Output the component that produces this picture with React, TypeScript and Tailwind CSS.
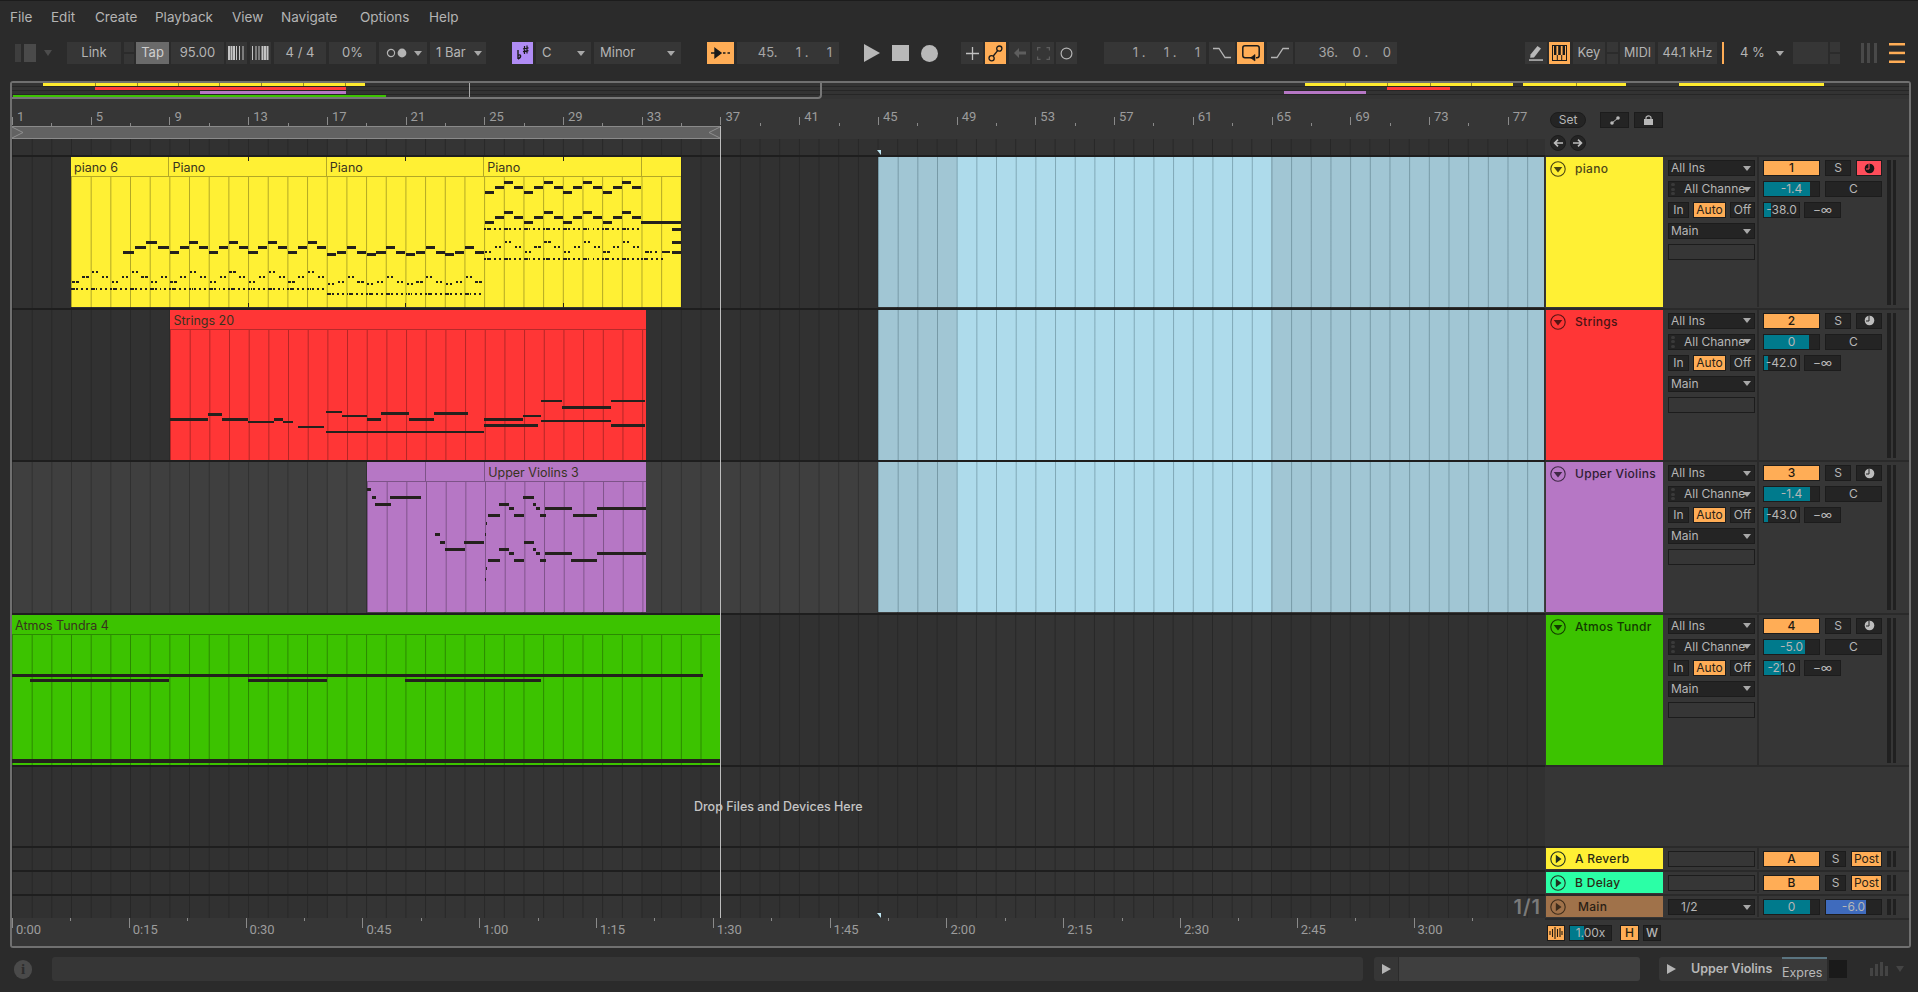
import React from "react";
import { twMerge } from "tailwind-merge";

const BAR = 19.68;
const cx = (...c: (string | false | undefined)[]) => twMerge(c.filter(Boolean).join(" "));
const bx = (bar: number) => (bar - 1) * BAR;

type N = [number, number, number, number?];

/* ---------- note data (page coordinates) ---------- */
function pianoNotes(): N[] {
  const out: N[] = [];
  const S = 9.84;
  const high = (x0: number, x1: number, ys: number[], startIdx = 0, step = S) => {
    let i = startIdx;
    for (let x = x0; x < x1 - 1; x += step, i++) out.push([x + 0.4, Math.min(x + step - 0.4, x1), ys[i % 4], 3]);
  };
  const mid = (x0: number, x1: number, ys: number[], startIdx = 0) => {
    let i = startIdx;
    for (let x = x0; x < x1 - 1; x += S, i++) {
      out.push([x + 1, x + 3.2, ys[i % 4], 2]);
      out.push([x + 5, x + 7.2, ys[i % 4], 2]);
    }
  };
  const dots = (x0: number, x1: number, y: number) => {
    let k = 0;
    for (let x = x0; x < x1 - 1; x += 2.46, k++) {
      if (k % 8 === 3 || k % 8 === 5 || k % 8 === 7) continue;
      out.push([x, x + 1.9, y, 2]);
    }
  };
  const A = [250.7, 246, 240.7, 246];
  const Am = [280.7, 276, 270.7, 276];
  const B = [253.3, 250.7, 246, 250.7];
  const Bm = [283.3, 281, 276, 281];
  const Ct = [190.7, 185.7, 180.7, 185.7];
  const Cs = [220.7, 215.7, 210.7, 215.7];
  high(123, 169.4, A, 0, 11.5);
  mid(71.5, 169.4, Am, 0);
  dots(71, 169.4, 288);
  high(169.4, 326.9, A);
  mid(169.4, 326.9, Am);
  dots(169.4, 326.9, 288);
  high(326.9, 484.3, B);
  mid(326.9, 484.3, Bm);
  dots(326.9, 484.3, 293.3);
  high(484.3, 641.5, Ct);
  high(484.3, 641.5, Cs);
  dots(484.3, 641.5, 228.3);
  mid(484.3, 641.5, A);
  dots(484.3, 641.5, 258.3);
  out.push([641.5, 681, 220.7, 3], [672, 681, 228.3, 3], [672, 681, 240.7, 3], [672, 681, 250.7, 3], [662, 670, 250.7, 2]);
  dots(645, 660, 250.7);
  dots(641.5, 663, 258.3);
  [248, 405, 563].forEach((x) => out.push([x, x + 1, 157, 4], [x, x + 1, 303, 4]));
  return out;
}
const D = 1.2232;
const stringsNotes: N[] = (
  [
    [139, 170, 342], [170, 182, 338], [182, 203, 342], [203, 224, 344], [224, 232, 342], [232, 240, 344],
    [244, 265, 348], [267, 396, 352], [267, 280, 336], [280, 300, 339], [300, 312, 342], [312, 335, 337],
    [335, 355, 342], [355, 383, 337], [396, 428, 342], [396, 440, 347], [428, 443, 339], [443, 460, 327],
    [443, 500, 343], [460, 500, 332], [500, 528, 327], [500, 528, 347],
  ] as number[][]
).map(([a, b, y]) => [a * D, b * D, y * D, 2.4]);

const vz = (a: number, b: number, y: number): N => [360 + a / 2.8, 360 + b / 2.8, 450 + y / 3, 3];
const violinNotes: N[] = [
  vz(20, 31, 117), vz(33, 45, 140), vz(44, 87, 162), vz(86, 171, 140), vz(212, 224, 252), vz(226, 238, 275),
  vz(240, 294, 297), vz(292, 348, 275), vz(353, 357, 218), vz(350, 353, 252), vz(353, 357, 353), vz(350, 353, 387),
  vz(358, 392, 196), vz(390, 417, 162), vz(417, 431, 174), vz(432, 460, 196), vz(456, 487, 140), vz(484, 494, 162),
  vz(494, 504, 174), vz(505, 522, 196), vz(520, 595, 174), vz(597, 665, 196), vz(663, 802, 174),
  vz(358, 392, 331), vz(390, 417, 297), vz(417, 431, 308), vz(432, 460, 331), vz(460, 487, 275), vz(484, 494, 297),
  vz(494, 504, 308), vz(505, 522, 331), vz(520, 595, 308), vz(592, 665, 331), vz(663, 802, 308),
];
const atmosNotes: N[] = [
  [12, 703, 674, 3], [30, 169, 679, 3], [248, 327, 679, 3], [405, 541, 679, 3], [12, 720, 759, 4],
];

/* ---------- clips ---------- */
function Notes({ notes, x, y, w, h }: { notes: N[]; x: number; y: number; w: number; h: number }) {
  return (
    <svg width={w} height={h} className="absolute left-0 top-0 block" shapeRendering="crispEdges">
      {notes.map(([a, b, ny, nh], i) => (
        <rect key={i} x={a - x} y={ny - y} width={Math.max(b - a, 1)} height={nh ?? 2} fill="#24211d" />
      ))}
    </svg>
  );
}

function Clip({
  from, to, titles, bg, rule, notes, top,
}: {
  from: number; to: number; titles: { text: string; w: number }[]; bg: string; rule: string; notes: N[]; top: number;
}) {
  const left = bx(from);
  const width = (to - from) * BAR;
  const h = 150;
  return (
    <div className={cx("absolute top-0 overflow-hidden font-['Inter',sans-serif]", bg)} style={{ left, width, height: h }}>
      <div className={cx("flex h-[20px] border-b", rule)}>
        {titles.map((t, i) => (
          <div key={i} className={cx("h-full shrink-0 overflow-hidden whitespace-nowrap border-r pl-[3px] text-[12.5px] leading-[21px] text-[#38331f] last:border-r-0", rule)} style={{ width: t.w }}>
            {t.text}
          </div>
        ))}
      </div>
      <div className="h-[130px] bg-[linear-gradient(90deg,rgba(0,0,0,0.3)_1px,transparent_1px)] bg-size-[19.68px_100%]" />
      <Notes notes={notes} x={12 + left} y={top} w={width} h={h} />
    </div>
  );
}

function BlueClip() {
  return (
    <div className="absolute top-0 flex h-[150px] w-[666px] left-[865.9px] bg-[#a1c6d4]">
      <div className="h-full w-[78.72px] bg-[#a1c6d4]" />
      <div className="h-full w-[314.88px] bg-[#aedbeb]" />
      <div className="h-full flex-1 bg-[#a1c6d4]" />
      <div className="absolute inset-0 bg-[linear-gradient(90deg,rgba(40,70,80,0.35)_1px,transparent_1px)] bg-size-[19.68px_100%]" />
    </div>
  );
}

/* ---------- toolbar ---------- */
function Tb({ className, children }: { className?: string; children?: React.ReactNode }) {
  return (
    <div className={cx("flex h-[22px] shrink-0 items-center justify-center bg-[#363636] text-[13px] text-[#b4b4b4]", className)}>{children}</div>
  );
}
function Stacked({ className }: { className?: string }) {
  return (
    <div className={cx("flex h-[22px] shrink-0 flex-col justify-between", className)}>
      <div className="h-[10px] bg-[#363636]" />
      <div className="h-[10px] bg-[#363636]" />
    </div>
  );
}
function Arrow({ className }: { className?: string }) {
  return (
    <svg width="8" height="5" viewBox="0 0 8 5" className={cx("shrink-0", className)}>
      <path d="M0 0H8L4 5Z" fill="#a8a8a8" />
    </svg>
  );
}
const Bars = ({ flip }: { flip?: boolean }) => (
  <svg width="17" height="14" viewBox="0 0 17 14">
    {(flip ? [0, 3.5, 6.5, 9.5, 12, 14.5] : [0, 2.5, 5, 8, 11, 14.5]).map((x, i) => (
      <rect key={i} x={x} y="0" width={(flip ? i >= 3 : i < 3) ? 2 : 1} height="14" fill="#c4c4c4" />
    ))}
  </svg>
);

function Toolbar() {
  return (
    <div className="mt-[8px] flex h-[22px] items-center pl-[15px] font-['Inter',sans-serif]">
      <svg width="21" height="18" viewBox="0 0 21 18" className="shrink-0">
        <rect x="0" y="0" width="6" height="18" fill="#3e3e3e" />
        <rect x="9" y="0" width="12" height="18" fill="#4a4a4a" />
      </svg>
      <svg width="8" height="6" viewBox="0 0 8 6" className="ml-[8px] shrink-0"><path d="M0 0H8L4 6Z" fill="#4c4c4c" /></svg>
      <Tb className="ml-[15px] w-[54px]">Link</Tb>
      <Stacked className="ml-[3px] w-[10px]" />
      <Tb className="ml-[2px] w-[33px] bg-[#6a6a6a] text-[#cfcfcf]">Tap</Tb>
      <Tb className="ml-[2px] w-[53px]">95.00</Tb>
      <Tb className="ml-[2px] w-[21px]"><Bars /></Tb>
      <Tb className="ml-[3px] w-[21px]"><Bars flip /></Tb>
      <Tb className="ml-[3px] w-[52px] whitespace-pre">4 / 4</Tb>
      <Tb className="ml-[3px] w-[47px]">0%</Tb>
      <Tb className="ml-[3px] w-[48px] justify-start pl-[7px]">
        <svg width="21" height="10" viewBox="0 0 21 10">
          <circle cx="5" cy="5" r="3.6" fill="none" stroke="#b4b4b4" strokeWidth="1.2" />
          <circle cx="16" cy="5" r="4.4" fill="#b4b4b4" />
        </svg>
        <Arrow className="ml-[7px]" />
      </Tb>
      <Tb className="ml-[3px] w-[56px] justify-start pl-[6px]">1 Bar<Arrow className="ml-[8px]" /></Tb>
      <Tb className="ml-[26px] w-[21px] bg-[#b08cf5] text-black">
        <svg width="15" height="16" viewBox="0 0 15 16">
          <path d="M3 5V14M3 10.5C6 8.5 7 12 3 14" fill="none" stroke="#1a1a1a" strokeWidth="1.4" />
          <path d="M9.5 1V9M12 0.5V8.5M8 3.8L13.5 2.8M8 6.6L13.5 5.6" fill="none" stroke="#1a1a1a" strokeWidth="1.2" />
        </svg>
      </Tb>
      <Tb className="ml-[3px] w-[55px] justify-between px-[6px]">C<Arrow /></Tb>
      <Tb className="ml-[3px] w-[87px] justify-between px-[6px]">Minor<Arrow /></Tb>
      <Tb className="ml-[26px] w-[27px] bg-[#ffad56]">
        <svg width="19" height="12" viewBox="0 0 19 12">
          <path d="M0 6H7M4 1.5L10 6L4 10.5Z" fill="#1a1a1a" stroke="#1a1a1a" strokeWidth="1.4" />
          <path d="M12 6H14.5M16.5 6H19" stroke="#1a1a1a" strokeWidth="1.6" />
        </svg>
      </Tb>
      <Tb className="ml-[3px] w-[102px] justify-end whitespace-pre pr-[7px] text-[#a6a6a6]">{"45.     1 .     1"}</Tb>
      <svg width="16" height="18" viewBox="0 0 16 18" className="ml-[25px] shrink-0"><path d="M0 0L16 9L0 18Z" fill="#b8b8b8" /></svg>
      <div className="ml-[12px] h-[16px] w-[17px] shrink-0 bg-[#b8b8b8]" />
      <div className="ml-[12px] h-[17px] w-[17px] shrink-0 rounded-full bg-[#b8b8b8]" />
      <Tb className="ml-[23px] w-[22px]">
        <svg width="13" height="13" viewBox="0 0 13 13"><path d="M6.5 0V13M0 6.5H13" stroke="#c0c0c0" strokeWidth="1.3" /></svg>
      </Tb>
      <Tb className="ml-[2px] w-[21px] bg-[#ffad56]">
        <svg width="15" height="17" viewBox="0 0 15 17" fill="none" stroke="#1a1a1a" strokeWidth="1.3">
          <circle cx="3.6" cy="13.2" r="2.6" /><circle cx="11.3" cy="3.6" r="2.6" /><path d="M5.3 11L9.6 5.7" />
        </svg>
      </Tb>
      <Tb className="ml-[3px] w-[21px]">
        <svg width="12" height="10" viewBox="0 0 12 10"><path d="M0 5L5 0V3.5H12V6.5H5V10Z" fill="#5e5e5e" /></svg>
      </Tb>
      <Tb className="ml-[2px] w-[22px]">
        <svg width="13" height="13" viewBox="0 0 13 13" fill="none" stroke="#5e5e5e" strokeWidth="1.2">
          <path d="M0.6 3.5V0.6H3.5M9.5 0.6H12.4V3.5M12.4 9.5V12.4H9.5M3.5 12.4H0.6V9.5" />
        </svg>
      </Tb>
      <Tb className="ml-[2px] w-[21px]">
        <svg width="13" height="13" viewBox="0 0 13 13"><circle cx="6.5" cy="6.5" r="5.4" fill="none" stroke="#b4b4b4" strokeWidth="1.2" /></svg>
      </Tb>
      <Tb className="ml-[27px] w-[102px] justify-end whitespace-pre pr-[6px] text-[#a6a6a6]">{"1 .     1 .     1"}</Tb>
      <Tb className="ml-[3px] w-[26px]">
        <svg width="18" height="12" viewBox="0 0 18 12"><path d="M0 1.5H6L12 10.5H18" fill="none" stroke="#b4b4b4" strokeWidth="1.3" /></svg>
      </Tb>
      <Tb className="ml-[2px] w-[27px] bg-[#ffad56]">
        <svg width="18" height="17" viewBox="0 0 18 17" fill="none" stroke="#1a1a1a" strokeWidth="1.5">
          <path d="M10 12.8H3C1.7 12.8 0.8 11.9 0.8 10.6V2.9C0.8 1.6 1.7 0.8 3 0.8H15C16.3 0.8 17.2 1.6 17.2 2.9V10.6C17.2 11.9 16.3 12.8 15 12.8H14" />
          <path d="M13 9.5V16L8.5 12.8Z" fill="#1a1a1a" strokeWidth="0.6" />
        </svg>
      </Tb>
      <Tb className="ml-[3px] w-[26px]">
        <svg width="18" height="12" viewBox="0 0 18 12"><path d="M0 10.5H6L12 1.5H18" fill="none" stroke="#b4b4b4" strokeWidth="1.3" /></svg>
      </Tb>
      <Tb className="ml-[2px] w-[102px] justify-end whitespace-pre pr-[6px] text-[#a6a6a6]">{"36.    0 .    0"}</Tb>
      <Tb className="ml-[128px] w-[22px]">
        <svg width="14" height="16" viewBox="0 0 14 16"><path d="M8.5 1L12 3.6L5 12.5L1.2 12.8L1.5 9.5Z" fill="#b8b8b8" /><rect x="0" y="14.3" width="14" height="1.5" fill="#b8b8b8" /></svg>
      </Tb>
      <Tb className="ml-[2px] w-[21px] bg-[#ffad56]">
        <svg width="15" height="16" viewBox="0 0 15 16">
          <rect x="0.5" y="0.5" width="14" height="15" fill="#ffad56" stroke="#1a1a1a" />
          <path d="M2 1H4.4V10H2ZM6.2 1H8.8V10H6.2ZM10.6 1H13V10H10.6Z" fill="#1a1a1a" />
          <path d="M5.3 10V15M9.7 10V15" stroke="#1a1a1a" />
        </svg>
      </Tb>
      <Tb className="ml-[3px] w-[32px]">Key</Tb>
      <Stacked className="ml-[2px] w-[11px]" />
      <Tb className="ml-[2px] w-[35px] text-[12.5px]">MIDI</Tb>
      <Tb className="ml-[3px] w-[59px] text-[12.5px]">44.1 kHz</Tb>
      <div className="ml-[5px] h-[22px] w-[2px] shrink-0 bg-[#ffad56]" />
      <Tb className="ml-[1px] w-[64px] justify-between bg-[#2b2b2b] pl-[15px] pr-[5px]">4 %<Arrow /></Tb>
      <Tb className="ml-[4px] w-[35px]" />
      <Stacked className="ml-[2px] w-[10px]" />
      <svg width="16" height="20" viewBox="0 0 16 20" className="ml-[21px] shrink-0">
        <rect x="0" y="0" width="3" height="20" fill="#494949" /><rect x="6" y="0" width="3" height="20" fill="#494949" /><rect x="13" y="0" width="3" height="20" fill="#494949" />
      </svg>
      <svg width="16" height="20" viewBox="0 0 16 20" className="ml-[12px] shrink-0">
        <rect y="0" width="16" height="2.5" fill="#ffad56" /><rect y="8.7" width="16" height="2.5" fill="#ffad56" /><rect y="17.5" width="16" height="2.5" fill="#ffad56" />
      </svg>
    </div>
  );
}

/* ---------- overview ---------- */
function Overview() {
  const bars: [number, number, number, string][] = [
    [43, 365, 0, "#ffeb2e"], [94.7, 346, 4, "#ff3a3a"], [200, 346, 8, "#b677c5"], [13, 386, 11.5, "#3cc300"],
    [1304.5, 1512.7, 0, "#ffeb2e"], [1523, 1626, 0, "#ffeb2e"], [1679, 1824, 0, "#ffeb2e"],
    [1387, 1450, 4, "#ff3a3a"], [1284, 1366, 8, "#b677c5"],
  ];
  const cuts = [95, 137, 178, 219, 261, 303, 345, 1345, 1387, 1430, 1471, 1576];
  return (
    <svg width="1897" height="16" className="block shrink-0 bg-[#333333]" shapeRendering="crispEdges">
      {[3, 7, 11].map((y) => <rect key={y} x="0" y={y} width="1897" height="1" fill="#262626" />)}
      {bars.map(([a, b, y, c], i) => <rect key={i} x={a - 12} y={y} width={b - a} height="3" fill={c} />)}
      {cuts.map((x) => <rect key={x} x={x - 12} y="0" width="1" height="3" fill="#9a8a20" />)}
      <rect x="457" y="0" width="1" height="15" fill="#a8a8a8" />
      <path d="M0 15H806Q809 15 809 12V0" fill="none" stroke="#777777" strokeWidth="2" shapeRendering="auto" />
    </svg>
  );
}

/* ---------- rulers ---------- */
function BarRuler() {
  const labels = Array.from({ length: 20 }, (_, i) => 1 + i * 4);
  return (
    <div className="flex h-[27px] overflow-hidden bg-[#363636] font-['Roboto',sans-serif] text-[13px] text-[#9c9c9c]">
      {labels.map((n) => (
        <div key={n} className="flex w-[78.72px] shrink-0">
          <div className="flex w-[39.36px] items-end">
            <div className="mb-px h-[8px] w-px shrink-0 bg-[#8a8a8a]" />
            <span className="relative top-[-1px] pl-[4px] leading-[16px]">{n}</span>
          </div>
          <div className="flex w-[39.36px] items-end">
            <div className="h-[3px] w-px bg-[#8a8a8a]" />
          </div>
        </div>
      ))}
    </div>
  );
}
function LoopBrace() {
  return (
    <div className="flex h-[13px] w-[708px] items-center justify-between border-y border-[#8a8a8a] bg-[#626262]">
      <svg width="12" height="11" viewBox="0 0 12 11"><path d="M0 0L11 5.5L0 11" fill="none" stroke="#8f8f8f" /></svg>
      <svg width="12" height="11" viewBox="0 0 12 11"><path d="M12 0L1 5.5L12 11" fill="none" stroke="#8f8f8f" /></svg>
    </div>
  );
}
function TimeRuler() {
  const labels = ["0:00", "0:15", "0:30", "0:45", "1:00", "1:15", "1:30", "1:45", "2:00", "2:15", "2:30", "2:45", "3:00", ""];
  return (
    <div className="flex h-[28px] overflow-hidden bg-[#363636] font-['Roboto',sans-serif] text-[13px] text-[#9c9c9c]">
      {labels.map((t, i) => (
        <div key={i} className="flex w-[116.8px] shrink-0">
          <div className="flex w-[58.4px] items-start">
            {t && <div className="h-[10px] w-px shrink-0 bg-[#8a8a8a]" />}
            <span className="pl-[3px] pt-[4px] leading-[16px]">{t}</span>
          </div>
          <div className="flex w-[58.4px] items-start">
            <div className="h-[3px] w-px bg-[#8a8a8a]" />
          </div>
        </div>
      ))}
    </div>
  );
}

/* ---------- lanes ---------- */
const laneBg =
  "bg-[#343434] bg-[linear-gradient(90deg,#272727_1px,transparent_1px),linear-gradient(90deg,rgba(0,0,0,0.06)_50%,transparent_50%)] bg-size-[19.68px_100%,629.76px_100%]";
const laneSel =
  "bg-[#424242] bg-[linear-gradient(90deg,#303030_1px,transparent_1px),linear-gradient(90deg,rgba(0,0,0,0.05)_50%,transparent_50%)] bg-size-[19.68px_100%,629.76px_100%]";

function Lane({ h, sel, children }: { h: string; sel?: boolean; children?: React.ReactNode }) {
  return (
    <div className={cx("shrink-0 border-t-2 border-[#1e1e1e]", h)}>
      <div className={sel ? "relative h-full " + laneSel : "relative h-full " + laneBg}>{children}</div>
    </div>
  );
}

function Timeline() {
  return (
    <div className="relative w-[1533px] shrink-0">
      <BarRuler />
      <LoopBrace />
      <div className={"relative h-[16px] " + laneBg}>
        <div className="absolute left-[865px] top-[11px] h-0 w-0 border-l-[4px] border-t-[5px] border-l-transparent border-t-[#bfe6f2]" />
      </div>
      <Lane h="h-[152.6px]">
        <Clip
          from={4} to={35} top={157} bg="bg-[#fff034]" rule="border-[#b3a826]" notes={pianoNotes()}
          titles={[{ text: "piano 6", w: 98.4 }, { text: "Piano", w: 157.44 }, { text: "Piano", w: 157.44 }, { text: "Piano", w: 157.44 }, { text: "", w: 39.4 }]}
        />
        <BlueClip />
      </Lane>
      <Lane h="h-[152.6px]">
        <Clip
          from={9.05} to={33.2} top={310} bg="bg-[#ff3636]" rule="border-[#b82a2a]" notes={stringsNotes}
          titles={[{ text: "Strings 20", w: 475 }]}
        />
        <BlueClip />
      </Lane>
      <Lane h="h-[152.6px]" sel>
        <Clip
          from={19.05} to={33.2} top={463} bg="bg-[#b677c5]" rule="border-[#7d5388]" notes={violinNotes}
          titles={[{ text: "", w: 59 }, { text: "", w: 59 }, { text: "Upper Violins 3", w: 161 }]}
        />
        <BlueClip />
      </Lane>
      <Lane h="h-[152.6px]">
        <Clip
          from={1} to={37} top={615} bg="bg-[#3cc300]" rule="border-[#2b8a02]" notes={atmosNotes}
          titles={[{ text: "Atmos Tundra 4", w: 708 }]}
        />
      </Lane>
      <Lane h="h-[81px]" />
      <Lane h="h-[24px]" />
      <Lane h="h-[24px]" />
      <Lane h="h-[24px]">
        <div className="absolute bottom-[1px] right-[4px] font-['Inter',sans-serif] text-[20px] font-semibold leading-[20px] tracking-[1px] text-[#7a7a7a]">1/1</div>
        <div className="absolute left-[865px] top-[17px] h-0 w-0 border-l-[4px] border-t-[5px] border-l-transparent border-t-[#bfe6f2]" />
      </Lane>
      <TimeRuler />
      <div className="absolute bottom-[28px] left-[708px] top-[27px] w-px bg-[#bdbdbd]" />
      <div className="absolute left-[682px] top-[699px] whitespace-nowrap font-['Inter',sans-serif] text-[12.5px] font-medium leading-[18px] text-[#c4c4c4]">
        Drop Files and Devices Here
      </div>
    </div>
  );
}

/* ---------- header / mixer ---------- */
const cell = "flex h-[16px] shrink-0 items-center border border-[#1c1c1c] text-[12px] text-[#b6b6b6]";

function Drop({ children, dots }: { children?: React.ReactNode; dots?: boolean }) {
  return (
    <div className={cx(cell, "w-[87px] justify-between bg-[#242424] pl-[2px] pr-[3px]")}>
      {dots ? (
        <span className="flex min-w-0 items-center">
          <span className="mr-[9px] flex h-[12px] w-[4px] shrink-0 flex-col justify-between">
            <i className="h-[3px] w-[4px] rounded-full bg-[#3a3a3a]" /><i className="h-[3px] w-[4px] rounded-full bg-[#3a3a3a]" /><i className="h-[3px] w-[4px] rounded-full bg-[#3a3a3a]" />
          </span>
          <span className="whitespace-nowrap">{children}</span>
        </span>
      ) : (
        <span className="whitespace-nowrap">{children}</span>
      )}
      <Arrow />
    </div>
  );
}
function ValueBar({ w, fill, text, color = "bg-[#007a8c]", className }: { w: number; fill: number; text: string; color?: string; className?: string }) {
  return (
    <div className={cx(cell, "relative justify-center overflow-hidden bg-[#242424]", className)} style={{ width: w }}>
      <div className={cx("absolute bottom-0 left-0 top-0", color)} style={{ width: fill }} />
      <span className="relative">{text}</span>
    </div>
  );
}
function Meter({ h }: { h: string }) {
  return (
    <div className={cx("ml-[5px] flex w-[9px] shrink-0 justify-between", h)}>
      <div className="h-full w-[4px] bg-[#202020]" />
      <div className="h-full w-[3px] bg-[#202020]" />
    </div>
  );
}
function Chevron({ kind, stroke }: { kind: "down" | "right"; stroke: string }) {
  return (
    <svg width="16" height="16" viewBox="0 0 16 16" className="shrink-0">
      <circle cx="8" cy="8" r="7.2" fill="none" stroke={stroke} strokeWidth="1.1" />
      {kind === "down" ? <path d="M3.7 6H12.3L8 11.5Z" fill={stroke} /> : <path d="M5.8 3.8L11.5 8L5.8 12.2Z" fill={stroke} />}
    </svg>
  );
}
function ArmIcon({ red }: { red?: boolean }) {
  const c = red ? "#161616" : "#bdbdbd";
  return (
    <svg width="11" height="11" viewBox="0 0 11 11">
      <circle cx="5.5" cy="5.5" r="4.8" fill={c} />
      <path d="M5 1V6H2" fill="none" stroke={red ? "#ff4d5a" : "#242424"} strokeWidth="1" />
    </svg>
  );
}

function TrackRow({
  name, bg, nameColor, stroke, num, red, v1, f1, v2, f2,
}: {
  name: string; bg: string; nameColor: string; stroke: string; num: string; red?: boolean; v1: string; f1: number; v2: string; f2: number;
}) {
  return (
    <div className="flex h-[152.6px] shrink-0 border-t-2 border-[#2a2a2a] pl-px">
      <div className={cx("flex h-[150px] w-[117px] shrink-0 items-start gap-[9px] overflow-hidden pl-[4px] pt-[4px]", bg)}>
        <Chevron kind="down" stroke={stroke} />
        <span className={cx("whitespace-nowrap text-[12px] font-medium leading-[15px] tracking-[0.3px]", nameColor)}>{name}</span>
      </div>
      <div className="ml-[5px] flex w-[87px] shrink-0 flex-col gap-[5px] pt-[3px]">
        <Drop>All Ins</Drop>
        <Drop dots>All Channe</Drop>
        <div className="flex justify-between">
          <div className={cx(cell, "w-[21px] justify-center bg-[#242424]")}>In</div>
          <div className={cx(cell, "w-[33px] justify-center bg-[#ffad56] text-[#2a2217]")}>Auto</div>
          <div className={cx(cell, "w-[25px] justify-center bg-[#242424]")}>Off</div>
        </div>
        <Drop>Main</Drop>
        <div className={cx(cell, "w-[87px] bg-[#363636]")} />
      </div>
      <div className="ml-[2px] h-[150px] w-[2px] shrink-0 bg-[#2a2a2a]" />
      <div className="ml-[4px] flex w-[119px] shrink-0 flex-col gap-[5px] pt-[3px]">
        <div className="flex justify-between">
          <div className={cx(cell, "w-[57px] justify-center bg-[#ffad56] font-medium text-[#1f1a12]")}>{num}</div>
          <div className={cx(cell, "w-[26px] justify-center bg-[#242424]")}>S</div>
          <div className={cx(cell, "w-[26px] justify-center", red ? "bg-[#ff4d5a]" : "bg-[#242424]")}><ArmIcon red={red} /></div>
        </div>
        <div className="flex justify-between">
          <ValueBar w={57} fill={f1} text={v1} />
          <div className={cx(cell, "w-[57px] justify-center bg-[#242424]")}>C</div>
        </div>
        <div className="flex gap-[4px]">
          <ValueBar w={37} fill={f2} text={v2} />
          <div className={cx(cell, "w-[37px] justify-center bg-[#242424]")}>−∞</div>
        </div>
      </div>
      <Meter h="mt-[3px] h-[145px]" />
    </div>
  );
}
function ReturnRow({ name, bg, tag }: { name: string; bg: string; tag: string }) {
  return (
    <div className="flex h-[24px] shrink-0 border-t-2 border-[#2a2a2a] pl-px">
      <div className={cx("flex h-[21px] w-[117px] shrink-0 items-center gap-[9px] pl-[4px]", bg)}>
        <Chevron kind="right" stroke="#22301f" />
        <span className="whitespace-nowrap text-[12px] font-medium tracking-[0.3px] text-[#2a2a14]">{name}</span>
      </div>
      <div className={cx(cell, "ml-[5px] mt-[3px] w-[87px] bg-[#363636]")} />
      <div className="ml-[2px] h-[21px] w-[2px] shrink-0 bg-[#2a2a2a]" />
      <div className={cx(cell, "ml-[4px] mt-[3px] w-[57px] justify-center bg-[#ffad56] font-medium text-[#1f1a12]")}>{tag}</div>
      <div className={cx(cell, "ml-[5px] mt-[3px] w-[21px] justify-center bg-[#242424]")}>S</div>
      <div className={cx(cell, "ml-[5px] mt-[3px] w-[31px] justify-center bg-[#ffad56] text-[#2a2217]")}>Post</div>
      <Meter h="mt-[3px] h-[16px]" />
    </div>
  );
}
function MainRow() {
  return (
    <div className="flex h-[24px] shrink-0 border-t-2 border-[#2a2a2a] pl-px">
      <div className="flex h-[21px] w-[117px] shrink-0 items-center gap-[12px] bg-[#a0724a] pl-[4px]">
        <Chevron kind="right" stroke="#3d2c1b" />
        <span className="whitespace-nowrap text-[12px] font-medium tracking-[0.3px] text-[#2a2015]">Main</span>
      </div>
      <div className={cx(cell, "ml-[5px] mt-[3px] w-[87px] justify-between bg-[#242424] pl-[12px] pr-[3px]")}>
        1/2<Arrow />
      </div>
      <div className="ml-[2px] h-[21px] w-[2px] shrink-0 bg-[#2a2a2a]" />
      <ValueBar w={57} fill={46} text="0" className="ml-[4px] mt-[3px]" />
      <ValueBar w={57} fill={40} text="-6.0" color="bg-[#3f6bbd]" className="ml-[5px] mt-[3px]" />
      <Meter h="mt-[3px] h-[16px]" />
    </div>
  );
}

function Headers() {
  return (
    <div className="flex w-[364px] shrink-0 flex-col bg-[#363636] font-['Inter',sans-serif]">
      <div className="flex h-[56px] shrink-0 flex-col pl-[5px] pt-[13px]">
        <div className="flex items-center">
          <div className="flex h-[16px] w-[36px] items-center justify-center rounded-full border border-[#1c1c1c] bg-[#242424] text-[12px] text-[#b6b6b6]">Set</div>
          <div className="ml-[14px] flex h-[16px] w-[29px] items-center justify-center border border-[#1c1c1c] bg-[#242424]">
            <svg width="10" height="9" viewBox="0 0 10 9"><circle cx="2" cy="7" r="1.8" fill="#b8b8b8" /><circle cx="8" cy="2" r="1.8" fill="#b8b8b8" /><path d="M2 7L8 2" stroke="#b8b8b8" /></svg>
          </div>
          <div className="ml-[5px] flex h-[16px] w-[29px] items-center justify-center border border-[#1c1c1c] bg-[#242424]">
            <svg width="9" height="10" viewBox="0 0 9 10"><rect x="0" y="4" width="9" height="6" fill="#b8b8b8" /><path d="M2 4V2.8C2 0.3 7 0.3 7 2.8V4" fill="none" stroke="#b8b8b8" strokeWidth="1.2" /></svg>
          </div>
        </div>
        <div className="mt-[7px] flex gap-[4px]">
          {["M10 5H2M5 1.6L1.6 5L5 8.4", "M0 5H8M5 1.6L8.4 5L5 8.4"].map((d) => (
            <div key={d} className="flex h-[16px] w-[16px] items-center justify-center rounded-full border border-[#1c1c1c] bg-[#242424]">
              <svg width="10" height="10" viewBox="0 0 10 10"><path d={d} fill="none" stroke="#bcbcbc" strokeWidth="1.7" /></svg>
            </div>
          ))}
        </div>
      </div>
      <TrackRow name="piano" bg="bg-[#fff034]" nameColor="text-[#4c4618]" stroke="#4a4412" num="1" red v1="-1.4" f1={46} v2="-38.0" f2={7} />
      <TrackRow name="Strings" bg="bg-[#ff3636]" nameColor="text-[#4a1414]" stroke="#571414" num="2" v1="0" f1={45} v2="-42.0" f2={4} />
      <TrackRow name="Upper Violins" bg="bg-[#b677c5]" nameColor="text-[#2e1c33]" stroke="#3f2846" num="3" v1="-1.4" f1={46} v2="-43.0" f2={4} />
      <TrackRow name="Atmos Tundr" bg="bg-[#3cc300]" nameColor="text-[#123a00]" stroke="#123a00" num="4" v1="-5.0" f1={41} v2="-21.0" f2={17} />
      <div className="h-[81px] shrink-0 border-t-2 border-[#2a2a2a]" />
      <ReturnRow name="A Reverb" bg="bg-[#fff034]" tag="A" />
      <ReturnRow name="B Delay" bg="bg-[#2bffa6]" tag="B" />
      <MainRow />
      <div className="flex h-[28px] shrink-0 items-start border-t-2 border-[#2a2a2a] pl-[2px] pt-[5px]">
        <div className={cx(cell, "w-[18px] justify-center bg-[#ffad56]")}>
          <svg width="14" height="12" viewBox="0 0 14 12">
            {[[1, 4, 8], [3.5, 2, 10], [6, 0, 12], [8.5, 2, 10], [11, 1, 10], [13, 4, 8]].map(([x, a, b], i) => (
              <path key={i} d={`M${x} ${a}V${b}`} stroke="#1f1a12" strokeWidth="1.1" />
            ))}
          </svg>
        </div>
        <ValueBar w={43} fill={14} text="1.00x" className="ml-[4px]" />
        <div className={cx(cell, "ml-[8px] w-[19px] justify-center bg-[#ffad56] font-medium text-[#2a1e10]")}>H</div>
        <div className={cx(cell, "ml-[4px] w-[18px] justify-center bg-[#242424] font-medium")}>W</div>
      </div>
    </div>
  );
}

/* ---------- status bar ---------- */
function StatusBar() {
  return (
    <div className="mt-[9px] flex h-[24px] items-center pl-[14px] font-['Inter',sans-serif]">
      <div className="flex h-[19px] w-[18px] shrink-0 items-center justify-center rounded-full bg-[#4a4a4a] font-['Liberation_Serif',serif] text-[15px] font-bold text-[#2c2c2c]">i</div>
      <div className="ml-[20px] h-[24px] w-[1311px] shrink-0 rounded-[3px] bg-[#363636]" />
      <div className="ml-[11px] flex h-[24px] w-[24px] shrink-0 items-center justify-center rounded-l-[3px] bg-[#363636]">
        <svg width="9" height="10" viewBox="0 0 9 10"><path d="M0 0L9 5L0 10Z" fill="#b4b4b4" /></svg>
      </div>
      <div className="ml-px h-[24px] w-[241px] shrink-0 rounded-r-[3px] bg-[#3f3f3f]" />
      <div className="ml-[19px] flex h-[24px] w-[24px] shrink-0 items-center justify-center rounded-l-[3px] bg-[#363636]">
        <svg width="9" height="10" viewBox="0 0 9 10"><path d="M0 0L9 5L0 10Z" fill="#b4b4b4" /></svg>
      </div>
      <div className="flex h-[24px] w-[99px] shrink-0 items-center bg-[#363636] pl-[8px] text-[12.5px] font-semibold text-[#b8b8b8]">Upper Violins</div>
      <div className="h-[24px] w-[45px] shrink-0 border-t-2 border-[#5a7480] bg-[#3a3a3a] pt-[5px] text-[12.5px] leading-[18px] text-[#b8b8b8]">Expres</div>
      <div className="ml-[2px] h-[18px] w-[18px] shrink-0 bg-[#1a1a1a]" />
      <svg width="19" height="14" viewBox="0 0 19 14" className="ml-[23px] shrink-0">
        {[[0, 6], [5, 2], [10, 0], [15, 4]].map(([x, y]) => <rect key={x} x={x} y={y} width="3" height={14 - y} fill="#444444" />)}
      </svg>
      <svg width="8" height="6" viewBox="0 0 8 6" className="ml-[7px] shrink-0"><path d="M0 0H8L4 6Z" fill="#444444" /></svg>
    </div>
  );
}

/* ---------- app ---------- */
export default function App() {
  const menu: [string, string][] = [
    ["File", "w-[41px]"], ["Edit", "w-[44px]"], ["Create", "w-[60px]"], ["Playback", "w-[77px]"],
    ["View", "w-[49px]"], ["Navigate", "w-[79px]"], ["Options", "w-[69px]"], ["Help", "w-[40px]"],
  ];
  return (
    <div className="h-[992px] w-[1918px] overflow-hidden border-t border-[#1c1c1c] bg-[#2b2b2b]">
      <div className="flex h-[33px] items-center pl-[10px] font-['Inter',sans-serif] text-[13.5px] text-[#b4b4b4]">
        {menu.map(([m, w]) => <div key={m} className={w}>{m}</div>)}
      </div>
      <Toolbar />
      <div className="ml-[10px] mt-[17px] flex h-[867px] w-[1901px] flex-col rounded-[3px] border-2 border-[#707070] bg-[#363636]">
        <Overview />
        <div className="flex flex-1 overflow-hidden">
          <Timeline />
          <Headers />
        </div>
      </div>
      <StatusBar />
    </div>
  );
}
